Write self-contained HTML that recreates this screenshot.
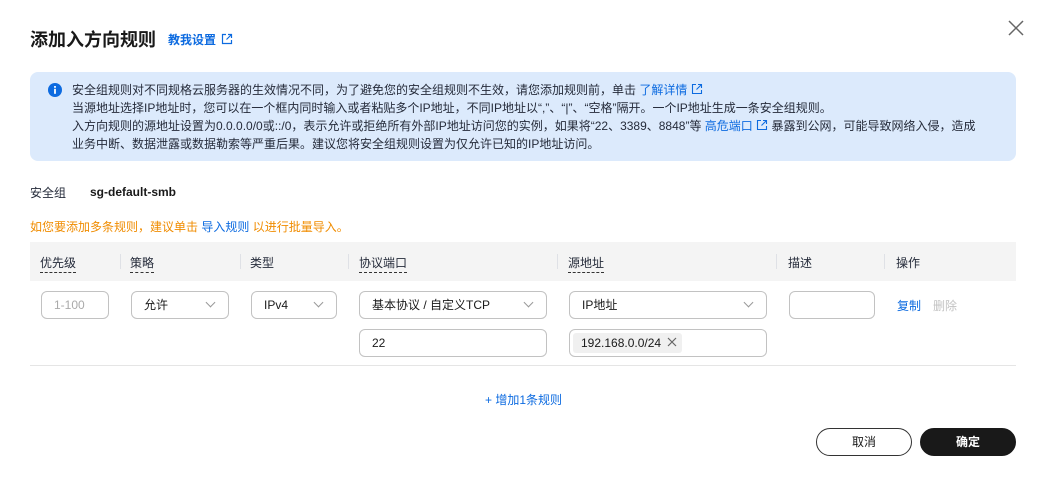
<!DOCTYPE html><html><head><meta charset="utf-8"><style>
*{box-sizing:border-box;margin:0;padding:0}
body{width:1046px;height:480px;background:#fff;font-family:"Liberation Sans","Noto Sans CJK SC",sans-serif;font-size:12px;color:#191919;position:relative;overflow:hidden}
.a{position:absolute;white-space:nowrap}
.blue{color:#0d6be0}
.alert{position:absolute;left:30px;top:72px;width:986px;height:89px;background:#dceafc;border-radius:8px}
.alert .t{position:absolute;left:42px;top:9px;line-height:18px;font-size:12px;color:#252b3a}
.hd{position:absolute;left:30px;top:242px;width:986px;height:39px;background:#f4f4f4}
.hd span{position:absolute;top:12px;color:#252b3a}
.dash{border-bottom:1px dashed #333;padding-bottom:1px}
.sep{position:absolute;top:12px;width:1px;height:15px;background:#dfe1e6}
.in{position:absolute;height:28px;border:1px solid #c2c2c2;border-radius:6px;padding-left:12px;line-height:26px;color:#191919}
.chev{position:absolute;right:14px;top:7px;width:7px;height:7px;border-right:1px solid #999;border-bottom:1px solid #999;transform:rotate(45deg)}
.btn{position:absolute;top:428px;width:96px;height:28px;border-radius:14px;text-align:center;line-height:26px}
</style></head><body>
<div class="a" style="left:30px;top:26px;font-size:18px;font-weight:bold;color:#191919">添加入方向规则</div>
<div class="a blue" style="left:168px;top:31px;font-weight:bold">教我设置 <svg width="12" height="12" viewBox="0 0 12 12" style="vertical-align:-1px;margin-left:2px"><path d="M5 1.5H1.5v9h9V7M7 1.5h3.5V5M10.5 1.5 5.5 6.5" fill="none" stroke="#0d6be0" stroke-width="1.2"/></svg></div>
<svg class="a" style="left:1007px;top:19px" width="18" height="18" viewBox="0 0 18 18"><path d="M2 2l14 14M16 2 2 16" stroke="#666" stroke-width="1.5"/></svg>
<div class="alert">
<svg class="a" style="left:18px;top:11px" width="14" height="14" viewBox="0 0 14 14"><circle cx="7" cy="7" r="7" fill="#0d6be0"/><rect x="6.1" y="5.8" width="1.8" height="5" fill="#fff"/><rect x="6.1" y="3" width="1.8" height="1.8" fill="#fff"/></svg>
<div class="t">安全组规则对不同规格云服务器的生效情况不同，为了避免您的安全组规则不生效，请您添加规则前，单击 <span class="blue">了解详情 <svg width="12" height="12" viewBox="0 0 12 12" style="vertical-align:-1px"><path d="M5 1.5H1.5v9h9V7M7 1.5h3.5V5M10.5 1.5 5.5 6.5" fill="none" stroke="#0d6be0" stroke-width="1.1"/></svg></span><br>当源地址选择IP地址时，您可以在一个框内同时输入或者粘贴多个IP地址，不同IP地址以“,”、“|”、“空格”隔开。一个IP地址生成一条安全组规则。<br>入方向规则的源地址设置为0.0.0.0/0或::/0，表示允许或拒绝所有外部IP地址访问您的实例，如果将“22、3389、8848”等 <span class="blue">高危端口 <svg width="12" height="12" viewBox="0 0 12 12" style="vertical-align:-1px"><path d="M5 1.5H1.5v9h9V7M7 1.5h3.5V5M10.5 1.5 5.5 6.5" fill="none" stroke="#0d6be0" stroke-width="1.1"/></svg></span> 暴露到公网，可能导致网络入侵，造成<br>业务中断、数据泄露或数据勒索等严重后果。建议您将安全组规则设置为仅允许已知的IP地址访问。</div>
</div>
<div class="a" style="left:30px;top:184px;color:#252b3a">安全组</div>
<div class="a" style="left:90px;top:185px;font-weight:bold">sg-default-smb</div>
<div class="a" style="left:30px;top:218px;color:#f08c00">如您要添加多条规则，建议单击 <span class="blue">导入规则</span> 以进行批量导入。</div>
<div class="hd">
<span style="left:10px" class="dash">优先级</span><div class="sep" style="left:90px"></div>
<span style="left:100px" class="dash">策略</span><div class="sep" style="left:210px"></div>
<span style="left:220px">类型</span><div class="sep" style="left:318px"></div>
<span style="left:329px" class="dash">协议端口</span><div class="sep" style="left:527px"></div>
<span style="left:538px" class="dash">源地址</span><div class="sep" style="left:746px"></div>
<span style="left:758px">描述</span><div class="sep" style="left:854px"></div>
<span style="left:866px">操作</span>
</div>
<div class="in" style="left:41px;top:291px;width:68px;color:#aaa">1-100</div>
<div class="in" style="left:131px;top:291px;width:98px">允许<i class="chev"></i></div>
<div class="in" style="left:251px;top:291px;width:86px">IPv4<i class="chev"></i></div>
<div class="in" style="left:359px;top:291px;width:188px">基本协议 / 自定义TCP<i class="chev"></i></div>
<div class="in" style="left:569px;top:291px;width:198px">IP地址<i class="chev"></i></div>
<div class="in" style="left:789px;top:291px;width:86px"></div>
<div class="a blue" style="left:897px;top:297px">复制</div>
<div class="a" style="left:933px;top:297px;color:#c2c2c2">删除</div>
<div class="in" style="left:359px;top:329px;width:188px">22</div>
<div class="in" style="left:569px;top:329px;width:198px;padding-left:3px"><span style="display:inline-block;background:#f0f0f0;border-radius:3px;height:20px;line-height:20px;padding:0 5px 0 8px;margin-top:3px;vertical-align:top">192.168.0.0/24 <svg width="10" height="10" viewBox="0 0 10 10" style="margin-left:3px"><path d="M1 1l8 8M9 1 1 9" stroke="#666" stroke-width="1.2"/></svg></span></div>
<div class="a" style="left:30px;top:365px;width:986px;height:1px;background:#e5e5e5"></div>
<div class="a blue" style="left:485px;top:391px;font-size:12px">+ 增加1条规则</div>
<div class="btn" style="left:816px;border:1px solid #333;color:#191919">取消</div>
<div class="btn" style="left:920px;background:#191919;color:#fff;border:1px solid #191919;font-weight:bold">确定</div>
</body></html>
